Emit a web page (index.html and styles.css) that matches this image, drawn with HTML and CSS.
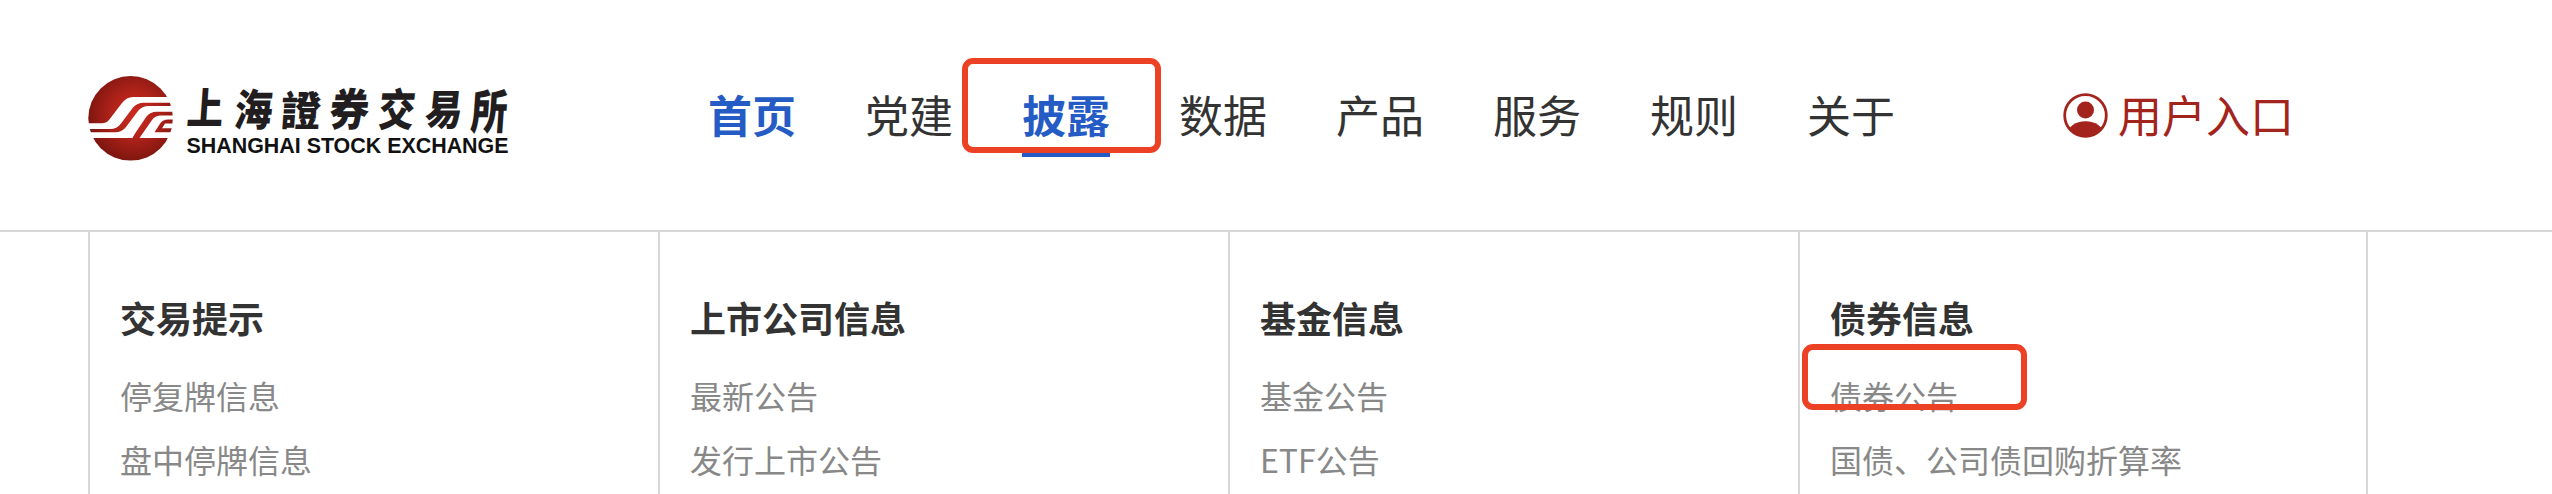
FILE: index.html
```html
<!DOCTYPE html>
<html lang="zh-CN">
<head>
<meta charset="utf-8">
<title>上海证券交易所</title>
<link rel="stylesheet" href="styles.css">
</head>
<body>
<header class="header">
  <a class="logo">
    <svg class="logo-svg" width="424" height="90" viewBox="0 0 424 90">
      <defs>
        <radialGradient id="ball" cx="0.55" cy="0.45" r="0.58">
          <stop offset="0" stop-color="#cb2a20"/>
          <stop offset="0.45" stop-color="#b2231a"/>
          <stop offset="1" stop-color="#7a150f"/>
        </radialGradient>
      </defs>
      <circle cx="42.6" cy="44.3" r="42.3" fill="url(#ball)"/>
      <g fill="#fff">
        <path d="M0 49.300H14Q18 49.300 21 46L34 29Q38.500 23 45 23H86V28.700H56Q49 28.700 45 33.500L33 49.500Q29 55 22 55H0Z"/>
        <path d="M0 58.300H27Q34 58.300 38 53L50 37Q54 32 61 32H86V37.700H69Q62 37.700 58.500 42.500L48 58Q46 61 44.500 64H0Z"/>
        <path d="M51.500 64L64 46Q67 41.500 73 41.500H86V45.500H80Q75 45.500 72.500 49L66.500 58.300H86V64Z"/>
        <path d="M77 49.500H86V54.300H74Z"/>
      </g>
      <g class="logo-cn">
        <text transform="translate(98 50) skewX(-4) scale(.96 1.12)">上</text>
        <text transform="translate(145 52) skewX(-6) scale(1 1.15)">海</text>
        <text transform="translate(192 52) skewX(-4) scale(1.05 1.08)">證</text>
        <text transform="translate(240 52) skewX(-6) scale(1.04 1.17)">券</text>
        <text transform="translate(289 52) skewX(-6) scale(.96 1.17)">交</text>
        <text transform="translate(336 51) skewX(-6) scale(.98 1.1)">易</text>
        <text transform="translate(382 55) skewX(-4) scale(.95 1.25)">所</text>
      </g>
      <text class="logo-en" x="98.500" y="78.500" textLength="322" lengthAdjust="spacingAndGlyphs">SHANGHAI STOCK EXCHANGE</text>
    </svg>
  </a>
  <nav class="nav">
    <a class="nav-item nav-strong">首页</a>
    <a class="nav-item">党建</a>
    <a class="nav-item nav-strong nav-active">披露<span class="mark mark-nav"></span></a>
    <a class="nav-item">数据</a>
    <a class="nav-item">产品</a>
    <a class="nav-item">服务</a>
    <a class="nav-item">规则</a>
    <a class="nav-item">关于</a>
  </nav>
  <a class="user">
    <svg width="45" height="45" viewBox="0 0 45 45">
      <defs><clipPath id="face"><circle cx="22.500" cy="22.500" r="21.500"/></clipPath></defs>
      <circle cx="22.500" cy="22.500" r="20.800" fill="none" stroke="#a3241c" stroke-width="2.800"/>
      <circle cx="22.500" cy="17" r="8.500" fill="#a3241c"/>
      <ellipse cx="22.500" cy="41" rx="18" ry="12.800" fill="#a3241c" clip-path="url(#face)"/>
    </svg>
    <span>用户入口</span>
  </a>
</header>
<main class="menu">
  <section class="col">
    <h3 class="col-title">交易提示</h3>
    <a class="link">停复牌信息</a>
    <a class="link">盘中停牌信息</a>
  </section>
  <section class="col">
    <h3 class="col-title">上市公司信息</h3>
    <a class="link">最新公告</a>
    <a class="link">发行上市公告</a>
  </section>
  <section class="col">
    <h3 class="col-title">基金信息</h3>
    <a class="link">基金公告</a>
    <a class="link">ETF公告</a>
  </section>
  <section class="col">
    <h3 class="col-title">债券信息</h3>
    <a class="link">债券公告<span class="mark mark-link"></span></a>
    <a class="link">国债、公司债回购折算率</a>
  </section>
</main>
</body>
</html>
```
FILE: styles.css
```css
* { box-sizing: border-box; }
body {
  margin: 0;
  height: 494px;
  overflow: hidden;
  background: #fff;
  color: #333;
  font-family: "Noto Sans CJK SC", sans-serif;
}
.header {
  display: flex;
  align-items: flex-start;
  height: 232px;
  padding-left: 88px;
  border-bottom: 2px solid #d8d8d8;
}
.logo { width: 620px; padding-top: 74px; }
.logo-svg { display: block; }
.logo-cn { font: 900 38px "Noto Sans CJK TC", sans-serif; fill: #221e1f; }
.logo-en { font: 700 21.5px "Liberation Sans", Arial, sans-serif; fill: #111; }
.nav { display: flex; gap: 69px; padding-top: 77px; }
.nav-item {
  position: relative;
  width: 88px;
  height: 80px;
  font-size: 44px;
  line-height: 75px;
  white-space: nowrap;
}
.nav-strong { color: #255bc4; font-weight: 700; }
.nav-active { border-bottom: 6px solid #255bc4; }
.user {
  display: flex;
  gap: 10px;
  margin-left: 168px;
  padding-top: 93px;
  color: #a3241c;
  font-size: 44px;
  line-height: 42px;
}
.menu { display: flex; margin-left: 88px; height: 262px; }
.col {
  width: 570px;
  padding: 58px 0 0 30px;
  border-left: 2px solid #d8d8d8;
}
.col:last-child { border-right: 2px solid #d8d8d8; }
.col-title { margin: 0 0 19px; font-size: 36px; line-height: 54px; font-weight: 700; }
.link {
  position: relative;
  display: block;
  color: #888;
  font-size: 32px;
  line-height: 64px;
}
/* annotation frames over the highlighted entries */
.mark { position: absolute; border: 6px solid #ed4126; border-radius: 11px; }
.mark-nav { left: -60px; top: -19px; width: 199px; height: 95px; }
.mark-link { left: -28px; top: -19px; width: 225px; height: 66px; }
```
